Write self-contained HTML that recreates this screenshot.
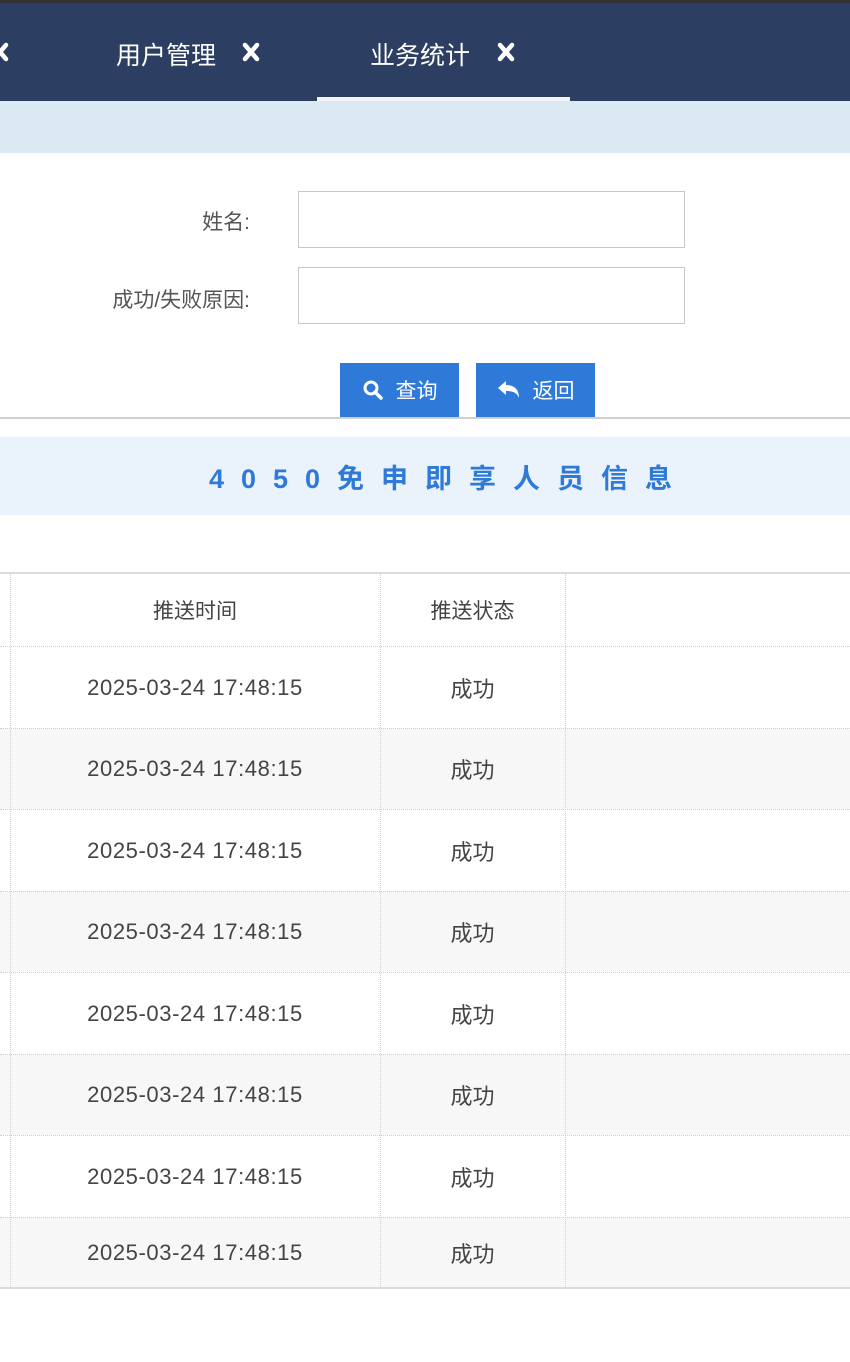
<!DOCTYPE html>
<html><head><meta charset="utf-8"><style>
*{margin:0;padding:0;box-sizing:border-box}
body{width:850px;height:1362px;background:#fff;position:relative;overflow:hidden;font-family:"Liberation Sans","Noto Sans CJK SC",sans-serif;color:#444}
.a{position:absolute}
.x{position:absolute;top:42px}
.lab{position:absolute;right:600px;font-size:21px;color:#555}
.inp{position:absolute;left:298px;width:387px;border:1px solid #c8c8c8;background:#fff}
.btn{position:absolute;top:363px;width:119px;height:54px;background:#2f7ad8;color:#fff;font-size:21px;display:flex;align-items:center;justify-content:center;gap:12px}
.row{position:absolute;left:0;width:850px;border-top:1px dotted #cfcfcf;font-size:22px;color:#444}
.row span{position:absolute;top:50%;transform:translateY(-50%);text-align:center}
.c1{left:10px;width:370px;letter-spacing:0.6px}.c2{left:380px;width:185px}
.vl{position:absolute;top:573px;height:715px;border-left:1px dotted #cfcfcf}
</style></head><body>
<div class="a" style="left:0;top:0;width:850px;height:3px;background:#333"></div>
<div class="a" style="left:0;top:3px;width:850px;height:98px;background:#2c3f62"></div>
<svg class="x" style="left:-9px" width="18" height="20" viewBox="0 0 18 20"><path d="M3 3l12 14M15 3L3 17" stroke="#fff" stroke-width="4.5" stroke-linecap="round"/></svg>
<div class="a" style="left:116px;top:36px;font-size:25px;color:#fff">用户管理</div>
<svg class="x" style="left:242px" width="18" height="20" viewBox="0 0 18 20"><path d="M3 3l12 14M15 3L3 17" stroke="#fff" stroke-width="4.5" stroke-linecap="round"/></svg>
<div class="a" style="left:370px;top:36px;font-size:25px;color:#fff">业务统计</div>
<svg class="x" style="left:497px" width="18" height="20" viewBox="0 0 18 20"><path d="M3 3l12 14M15 3L3 17" stroke="#fff" stroke-width="4.5" stroke-linecap="round"/></svg>
<div class="a" style="left:317px;top:97px;width:253px;height:4px;background:#f2f4f7"></div>
<div class="a" style="left:0;top:101px;width:850px;height:52px;background:#dbe9f3"></div>
<div class="lab" style="top:206px">姓名:</div>
<div class="inp" style="top:191px;height:57px"></div>
<div class="lab" style="top:284px">成功/失败原因:</div>
<div class="inp" style="top:267px;height:57px"></div>
<div class="btn" style="left:340px"><svg width="22" height="22" viewBox="0 0 22 22"><circle cx="9" cy="9" r="6" fill="none" stroke="#fff" stroke-width="3"/><path d="M13 13l6 6" stroke="#fff" stroke-width="3.5" stroke-linecap="round"/></svg>查询</div>
<div class="btn" style="left:476px"><svg width="24" height="20" viewBox="0 0 24 20"><path d="M1 8l8-7v4c8 0 13 4 13 13c-2-5-6-7-13-7v4z" fill="#fff"/></svg>返回</div>
<div class="a" style="left:0;top:417px;width:850px;height:2px;background:#d0d0d0"></div>
<div class="a" style="left:0;top:437px;width:850px;height:78px;background:#eaf3fb"></div>
<div class="a" style="left:0;top:457px;width:898px;text-align:center;font-size:27px;font-weight:bold;color:#2f7ad8;letter-spacing:17px">4050免申即享人员信息</div>
<div class="a" style="left:0;top:572px;width:850px;height:2px;background:#ddd"></div>
<div class="row" style="top:574px;height:72px;border-top:none;font-size:21px"><span class="c1" style="letter-spacing:0">推送时间</span><span class="c2">推送状态</span></div>
<div class="row" style="top:646px;height:82px;background:#fff"><span class="c1">2025-03-24 17:48:15</span><span class="c2">成功</span></div>
<div class="row" style="top:728px;height:81px;background:#f7f7f7"><span class="c1">2025-03-24 17:48:15</span><span class="c2">成功</span></div>
<div class="row" style="top:809px;height:82px;background:#fff"><span class="c1">2025-03-24 17:48:15</span><span class="c2">成功</span></div>
<div class="row" style="top:891px;height:81px;background:#f7f7f7"><span class="c1">2025-03-24 17:48:15</span><span class="c2">成功</span></div>
<div class="row" style="top:972px;height:82px;background:#fff"><span class="c1">2025-03-24 17:48:15</span><span class="c2">成功</span></div>
<div class="row" style="top:1054px;height:81px;background:#f7f7f7"><span class="c1">2025-03-24 17:48:15</span><span class="c2">成功</span></div>
<div class="row" style="top:1135px;height:82px;background:#fff"><span class="c1">2025-03-24 17:48:15</span><span class="c2">成功</span></div>
<div class="row" style="top:1217px;height:71px;background:#f7f7f7"><span class="c1">2025-03-24 17:48:15</span><span class="c2">成功</span></div>
<div class="a" style="left:0;top:1287px;width:850px;height:2px;background:#d8dce0"></div>
<div class="vl" style="left:10px"></div>
<div class="vl" style="left:380px"></div>
<div class="vl" style="left:565px"></div>
</body></html>
